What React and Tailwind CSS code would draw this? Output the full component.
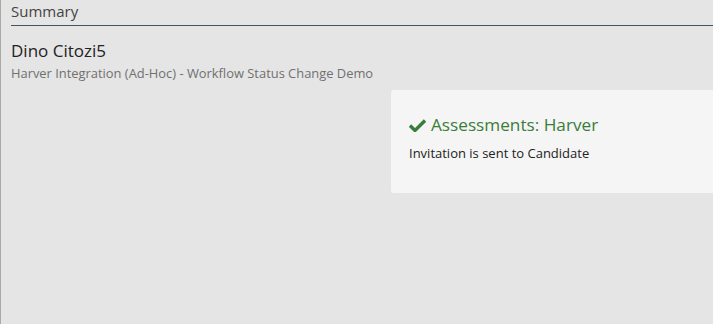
import React from "react";

const Check = () => (
  <svg width="17" height="14" viewBox="0 0 17 14" className="shrink-0">
    <path d="M1 7.5 L6 12.5 L16 2.5" fill="none" stroke="#3a7d3a" strokeWidth="3.4" strokeLinejoin="miter" />
  </svg>
);

const App = () => {
  return (
    <div
      className="w-[713px] h-[324px] bg-[#e5e5e5] border-l border-[#a9a9a9] overflow-hidden flex flex-col"
      style={{ fontFamily: '"Open Sans", "Noto Sans", sans-serif' }}
    >
      {/* header */}
      <div className="ml-[10px] border-b border-[#3d5566] h-[26px] flex items-end">
        <div className="text-[15px] leading-[20px] text-[#444] pb-[4px]">Summary</div>
      </div>

      {/* candidate */}
      <div className="pl-[10px] pt-[14px]">
        <div className="text-[17px] leading-[22px] text-[#222]">Dino Citozi5</div>
        <div className="text-[12.9px] leading-[18px] text-[#707070] mt-[2px]">
          Harver Integration (Ad-Hoc) - Workflow Status Change Demo
        </div>
      </div>

      {/* status card */}
      <div className="flex justify-end mt-[8px]">
        <div className="w-[322px] h-[103px] bg-[#f5f5f5] rounded-l-[3px] pl-[18px] pt-[23px]">
          <div className="flex items-center gap-[5px]">
            <Check />
            <div className="text-[17.2px] leading-[24px] text-[#3a7d3a]">Assessments: Harver</div>
          </div>
          <div className="text-[13px] leading-[18px] text-[#222] mt-[7px]">Invitation is sent to Candidate</div>
        </div>
      </div>
    </div>
  );
};

export default App;
